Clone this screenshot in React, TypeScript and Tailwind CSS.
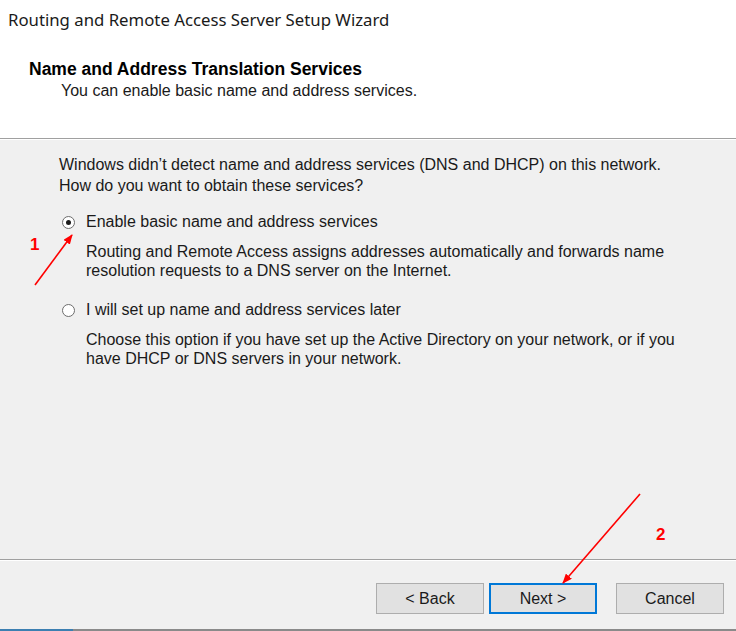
import React from 'react'

function Radio({ checked }: { checked?: boolean }) {
  return (
    <span className="relative inline-flex h-[13px] w-[13px] shrink-0 items-center justify-center rounded-full border border-[#6d6d6d] bg-white">
      {checked && <span className="h-[5px] w-[5px] rounded-full bg-[#1a1a1a]" />}
    </span>
  )
}

function Button({ label, focused }: { label: string; focused?: boolean }) {
  return (
    <button
      className={
        'h-[31px] w-[108px] bg-[#e1e1e1] text-[16px] text-[#1a1a1a] ' +
        (focused ? 'border-2 border-[#0078d7]' : 'border border-[#adadad]')
      }
    >
      {label}
    </button>
  )
}

export default function App() {
  const body = { fontFamily: '"Liberation Sans", Arial, sans-serif' }
  return (
    <div className="relative flex h-[631px] w-[736px] flex-col overflow-hidden bg-[#f0f0f0]" style={body}>
      {/* Header */}
      <div className="flex h-[139px] flex-col border-b border-[#a0a0a0] bg-white">
        <div className="pl-[8px] pt-[9px] text-[16.75px] leading-[22px] text-[#1a1a1a]" style={{ fontFamily: '"Noto Sans", sans-serif' }}>
          Routing and Remote Access Server Setup Wizard
        </div>
        <div className="pl-[29px] pt-[27px] text-[17.5px] font-bold leading-[22px] text-black">
          Name and Address Translation Services
        </div>
        <div className="pl-[61px] pt-[0px] text-[16px] leading-[22px] text-[#1a1a1a]">
          You can enable basic name and address services.
        </div>
      </div>
      <div className="h-px bg-white" />

      {/* Body */}
      <div className="flex flex-1 flex-col pl-[59px] pt-[14px] text-[16px] leading-[20px] text-[#1a1a1a]">
        <p className="leading-[21px]">
          Windows didn’t detect name and address services (DNS and DHCP) on this network.
          <br />
          How do you want to obtain these services?
        </p>

        <div className="mt-[16px] flex items-center gap-[11px] pl-[3px]">
          <Radio checked />
          <span>Enable basic name and address services</span>
        </div>
        <p className="mt-[10px] pl-[27px] leading-[19px]">
          Routing and Remote Access assigns addresses automatically and forwards name
          <br />
          resolution requests to a DNS server on the Internet.
        </p>

        <div className="mt-[20px] flex items-center gap-[11px] pl-[3px]">
          <Radio />
          <span>I will set up name and address services later</span>
        </div>
        <p className="mt-[10px] pl-[27px] leading-[19px]">
          Choose this option if you have set up the Active Directory on your network, or if you
          <br />
          have DHCP or DNS servers in your network.
        </p>
      </div>

      {/* Footer */}
      <div className="h-px bg-[#a0a0a0]" />
      <div className="h-px bg-white" />
      <div className="flex h-[68px] items-start pt-[22px] pl-[376px]">
        <Button label="< Back" />
        <div className="ml-[5px]">
          <Button label="Next >" focused />
        </div>
        <div className="ml-[19px]">
          <Button label="Cancel" />
        </div>
      </div>
      <div className="flex h-[2px]">
        <div className="w-[73px] bg-[#3c7fb1]" />
        <div className="flex-1 bg-[#8a8a8a]" />
      </div>

      {/* Annotations */}
      <span className="absolute left-[30px] top-[232px] text-[17px] font-bold text-[#ff0000]">1</span>
      <span className="absolute left-[656px] top-[522px] text-[17px] font-bold text-[#ff0000]">2</span>
      <svg className="pointer-events-none absolute left-0 top-0" width="736" height="631">
        <defs>
          <marker id="ah" markerWidth="10" markerHeight="8" refX="9" refY="4" orient="auto" markerUnits="userSpaceOnUse">
            <path d="M0,0 L10,4 L0,8 Z" fill="#ff0000" />
          </marker>
        </defs>
        <line x1="35" y1="285" x2="72" y2="235" stroke="#ff0000" strokeWidth="1.6" markerEnd="url(#ah)" />
        <line x1="640" y1="494" x2="563" y2="583" stroke="#ff0000" strokeWidth="1.6" markerEnd="url(#ah)" />
      </svg>
    </div>
  )
}
